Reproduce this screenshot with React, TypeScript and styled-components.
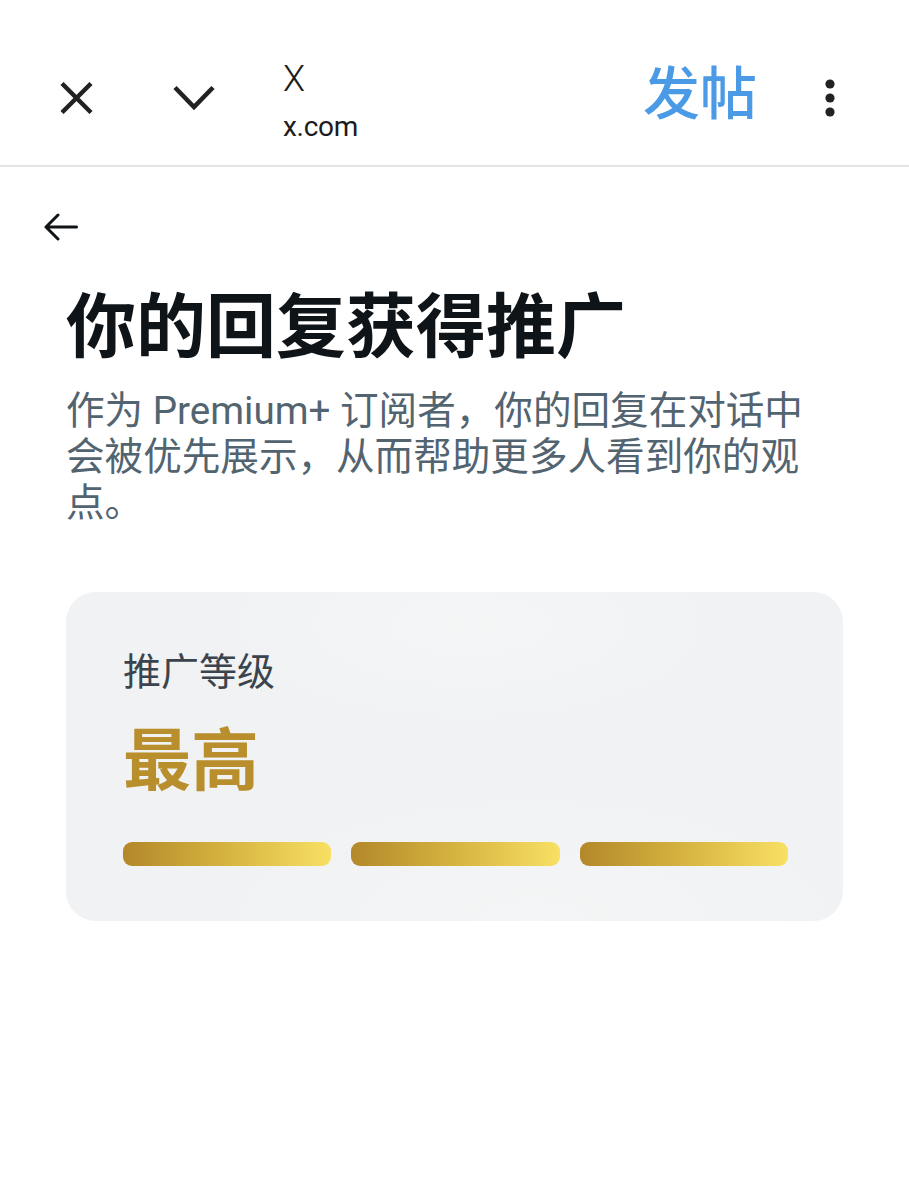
import React from "react";
import styled, { createGlobalStyle } from "styled-components";

const GlobalStyle = createGlobalStyle`
  html, body {
    margin: 0;
    padding: 0;
    background: #ffffff;
  }
  body {
    font-family: "Roboto", "Noto Sans CJK SC", sans-serif;
    -webkit-font-smoothing: antialiased;
  }
  * { box-sizing: border-box; }
`;

const Page = styled.div`
  width: 909px;
  min-height: 1200px;
  background: #ffffff;
`;

const TopBar = styled.header`
  height: 167px;
  padding: 30px 74px 0 60px;
  display: flex;
  align-items: center;
  border-bottom: 2px solid #e4e4e4;
`;

const IconButton = styled.button<{ $gap?: number }>`
  border: 0;
  background: transparent;
  padding: 0;
  margin-right: ${(p) => p.$gap ?? 0}px;
  display: flex;
  align-items: center;
  justify-content: center;
  color: #222222;
  cursor: pointer;
`;

const SiteInfo = styled.div`
  align-self: flex-start;
  margin-top: 29px;
  display: flex;
  flex-direction: column;
  gap: 8px;
  flex: 1;
  font-family: "Roboto", sans-serif;
  color: #1c1c1c;
`;

const SiteTitle = styled.div`
  font-size: 36px;
  font-weight: 300;
  line-height: 40px;
`;

const SiteUrl = styled.div`
  font-size: 28px;
  line-height: 40px;
  letter-spacing: -0.3px;
`;

const PostLink = styled.a`
  font-family: "Noto Sans CJK SC", sans-serif;
  font-size: 57px;
  font-weight: 500;
  line-height: 66px;
  color: #4a9ae6;
  margin: 0 68px 18px 0;
  text-decoration: none;
`;

const Main = styled.main`
  padding: 0 66px;
  display: flex;
  flex-direction: column;
  align-items: flex-start;
`;

const BackButton = styled.button`
  border: 0;
  background: transparent;
  padding: 0;
  margin: 43px 0 0 -22px;
  width: 34px;
  height: 34px;
  display: flex;
  align-items: center;
  justify-content: center;
  color: #0f1419;
`;

const Heading = styled.h1`
  margin: 36px 0 0 0;
  font-family: "Noto Sans CJK SC", sans-serif;
  font-weight: 700;
  font-size: 70px;
  line-height: 84px;
  color: #0f1419;
`;

const Lead = styled.p`
  margin: 24px 0 0 0;
  max-width: 755px;
  font-family: "Roboto", "Noto Sans CJK SC", sans-serif;
  font-size: 38.6px;
  line-height: 46px;
  color: #536471;
`;

const LevelCard = styled.section`
  margin-top: 66px;
  width: 100%;
  height: 329px;
  border-radius: 30px;
  padding: 52px 55px 0 57px;
  background:
    radial-gradient(ellipse 380px 150px at 52% 10%, rgba(255, 255, 255, 0.3), rgba(255, 255, 255, 0) 70%),
    radial-gradient(ellipse 500px 200px at 60% 100%, rgba(255, 255, 255, 0.25), rgba(255, 255, 255, 0) 70%),
    #f0f2f3;
  display: flex;
  flex-direction: column;
`;

const LevelLabel = styled.div`
  font-family: "Noto Sans CJK SC", sans-serif;
  font-size: 38px;
  line-height: 50px;
  color: #3b444c;
`;

const LevelValue = styled.div`
  margin-top: 22px;
  font-family: "Noto Sans CJK SC", sans-serif;
  font-weight: 700;
  font-size: 68px;
  line-height: 80px;
  color: #b98f2d;
`;

const Bars = styled.div`
  margin-top: 46px;
  display: grid;
  grid-template-columns: repeat(3, 1fr);
  gap: 20px;
`;

const Bar = styled.div`
  height: 24px;
  border-radius: 9px;
  background: linear-gradient(90deg, #b3882a 0%, #d6b440 50%, #f8e064 100%);
`;

export default function App() {
  return (
    <Page>
      <GlobalStyle />
      <TopBar>
        <IconButton $gap={80} aria-label="关闭">
          <svg width="33" height="32" viewBox="0 0 33 32" fill="none">
            <path d="M2 1.5 L31 30.5 M31 1.5 L2 30.5" stroke="currentColor" strokeWidth="4.4" strokeLinecap="butt" />
          </svg>
        </IconButton>
        <IconButton $gap={68} aria-label="展开">
          <svg width="42" height="26" viewBox="0 0 42 26" fill="none">
            <path d="M2 2.5 L21 22 L40 2.5" stroke="currentColor" strokeWidth="4.6" strokeLinecap="butt" strokeLinejoin="miter" />
          </svg>
        </IconButton>
        <SiteInfo>
          <SiteTitle>X</SiteTitle>
          <SiteUrl>x.com</SiteUrl>
        </SiteInfo>
        <PostLink>发帖</PostLink>
        <IconButton aria-label="更多">
          <svg width="10" height="38" viewBox="0 0 10 38">
            <circle cx="5" cy="5" r="4.6" fill="currentColor" />
            <circle cx="5" cy="19" r="4.6" fill="currentColor" />
            <circle cx="5" cy="33" r="4.6" fill="currentColor" />
          </svg>
        </IconButton>
      </TopBar>
      <Main>
        <BackButton aria-label="返回">
          <svg width="34" height="28" viewBox="0 0 34 28" fill="none">
            <path d="M2 14 H32.5 M14 2 L2 14 L14 26" stroke="currentColor" strokeWidth="3" strokeLinecap="round" strokeLinejoin="round" />
          </svg>
        </BackButton>
        <Heading>你的回复获得推广</Heading>
        <Lead>作为 Premium+ 订阅者，你的回复在对话中会被优先展示，从而帮助更多人看到你的观点。</Lead>
        <LevelCard>
          <LevelLabel>推广等级</LevelLabel>
          <LevelValue>最高</LevelValue>
          <Bars>
            <Bar />
            <Bar />
            <Bar />
          </Bars>
        </LevelCard>
      </Main>
    </Page>
  );
}
